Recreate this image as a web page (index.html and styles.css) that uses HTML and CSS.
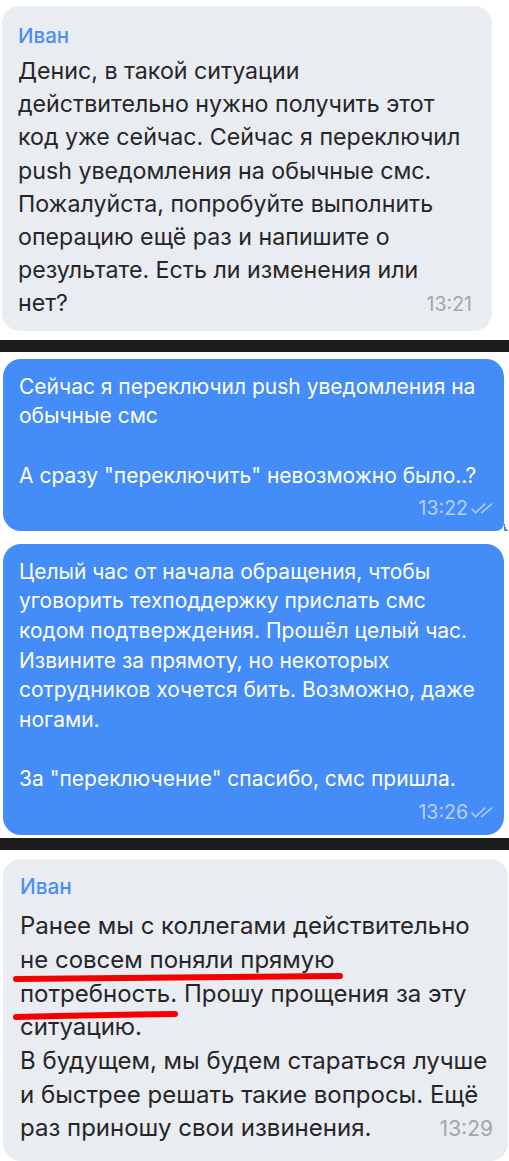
FILE: index.html
```html
<!DOCTYPE html>
<html lang="ru">
<head>
<meta charset="utf-8">
<link rel="stylesheet" href="styles.css">
</head>
<body>
<div class="page">
  <section class="shot shot-a">
    <div class="bubble incoming b1">
      <div class="name">Иван</div>
      <div class="text">
        <div class="line">Денис, в такой ситуации</div>
        <div class="line">действительно нужно получить этот</div>
        <div class="line">код уже сейчас. Сейчас я переключил</div>
        <div class="line">push уведомления на обычные смс.</div>
        <div class="line">Пожалуйста, попробуйте выполнить</div>
        <div class="line">операцию ещё раз и напишите о</div>
        <div class="line">результате. Есть ли изменения или</div>
        <div class="line last"><span>нет?</span><span class="time">13:21</span></div>
      </div>
    </div>
  </section>
  <div class="bar"></div>
  <section class="shot shot-b">
    <div class="bubble outgoing b2 tail">
      <div class="text">
        <div class="line">Сейчас я переключил push уведомления на</div>
        <div class="line">обычные смс</div>
        <div class="line">&nbsp;</div>
        <div class="line">А сразу "переключить" невозможно было..?</div>
      </div>
      <div class="meta">
        <span class="time">13:22</span>
        <svg class="checks" viewBox="0 0 22 11" width="22" height="11"><path d="M1 6 L4.6 9.8 L14 1 M10.5 9.8 L20.5 1" fill="none" stroke="currentColor" stroke-width="1.5" stroke-linecap="round" stroke-linejoin="round"/></svg>
      </div>
    </div>
    <div class="bubble outgoing b3">
      <div class="text">
        <div class="line">Целый час от начала обращения, чтобы</div>
        <div class="line">уговорить техподдержку прислать смс</div>
        <div class="line">кодом подтверждения. Прошёл целый час.</div>
        <div class="line">Извините за прямоту, но некоторых</div>
        <div class="line">сотрудников хочется бить. Возможно, даже</div>
        <div class="line">ногами.</div>
        <div class="line">&nbsp;</div>
        <div class="line">За "переключение" спасибо, смс пришла.</div>
      </div>
      <div class="meta">
        <span class="time">13:26</span>
        <svg class="checks" viewBox="0 0 22 11" width="22" height="11"><path d="M1 6 L4.6 9.8 L14 1 M10.5 9.8 L20.5 1" fill="none" stroke="currentColor" stroke-width="1.5" stroke-linecap="round" stroke-linejoin="round"/></svg>
      </div>
    </div>
  </section>
  <div class="bar"></div>
  <section class="shot shot-c">
    <div class="bubble incoming b4">
      <div class="name">Иван</div>
      <div class="text">
        <div class="line">Ранее мы с коллегами действительно</div>
        <div class="line">не совсем поняли прямую</div>
        <div class="line">потребность. Прошу прощения за эту</div>
        <div class="line">ситуацию.</div>
        <div class="line">В будущем, мы будем стараться лучше</div>
        <div class="line">и быстрее решать такие вопросы. Ещё</div>
        <div class="line last"><span>раз приношу свои извинения.</span><span class="time">13:29</span></div>
      </div>
      <svg class="marks" viewBox="0 0 509 302" width="509" height="302">
        <path d="M16 120 Q180 118 340 117" fill="none" stroke="#f40000" stroke-width="6" stroke-linecap="round"/>
        <path d="M16 158 Q100 156 175 155" fill="none" stroke="#f40000" stroke-width="6" stroke-linecap="round"/>
      </svg>
    </div>
  </section>
</div>
</body>
</html>
```
FILE: styles.css
```css
html, body {
  margin: 0;
  padding: 0;
  background: #ffffff;
}
.page {
  width: 509px;
  height: 1161px;
  overflow: hidden;
  font-family: "Inter", "Liberation Sans", sans-serif;
}
.shot {
  background: #ffffff;
  display: flex;
  flex-direction: column;
}
.shot-a {
  height: 340px;
  padding: 6px 0 0 2px;
  box-sizing: border-box;
}
.shot-b {
  height: 486px;
  padding: 7px 5px 0 3px;
  box-sizing: border-box;
  gap: 13px;
}
.shot-c {
  height: 311px;
  padding: 9px 1px 0 3px;
  box-sizing: border-box;
}
.bar {
  height: 12px;
  background: #1c1c1c;
}
.bubble {
  border-radius: 18px;
  box-sizing: border-box;
  position: relative;
}
.incoming {
  background: #e9ecf1;
  color: #262628;
}
.outgoing {
  background: #448cf8;
  color: #ffffff;
}
.tail {
  border-bottom-right-radius: 8px;
}
.tail::after {
  content: "";
  position: absolute;
  right: -5px;
  bottom: 0;
  width: 5px;
  height: 12px;
  background: radial-gradient(ellipse 5px 12px at 100% 0, transparent 96%, #448cf8 100%);
}
.b1 {
  width: 490px;
  height: 325px;
  padding: 15.5px 20px 0 16px;
}
.b1 .name {
  font-size: 20.5px;
  line-height: 28px;
  height: 33.5px;
}
.b1 .text {
  font-size: 23.2px;
  line-height: 33.2px;
}
.b1 .time {
  font-size: 19.5px;
}
.b2 {
  height: 172px;
  padding: 12.5px 11px 0 16px;
}
.b2 .text,
.b3 .text {
  font-size: 21px;
  line-height: 29.7px;
}
.b3 {
  height: 291px;
  padding: 12.5px 11px 0 16px;
}
.b4 {
  height: 310px;
  padding: 13.4px 15px 0 17px;
}
.b4 .name {
  font-size: 20.8px;
  line-height: 30px;
  height: 37px;
}
.b4 .text {
  font-size: 24px;
  line-height: 33.67px;
}
.b4 .time {
  font-size: 21px;
}
.name {
  color: #4a8ff6;
  font-weight: 500;
}
.line {
  white-space: nowrap;
}
.last {
  display: flex;
  justify-content: space-between;
  align-items: baseline;
}
.time {
  color: #a2a6ad;
}
.meta {
  display: flex;
  justify-content: flex-end;
  align-items: center;
  gap: 3px;
  height: 20px;
  line-height: 20px;
  margin-top: 8px;
  color: rgba(255, 255, 255, 0.62);
}
.meta .time {
  font-size: 19.5px;
  color: rgba(255, 255, 255, 0.62);
}
.checks {
  display: block;
}
.marks {
  position: absolute;
  left: -3px;
  top: 0;
  pointer-events: none;
}
```
